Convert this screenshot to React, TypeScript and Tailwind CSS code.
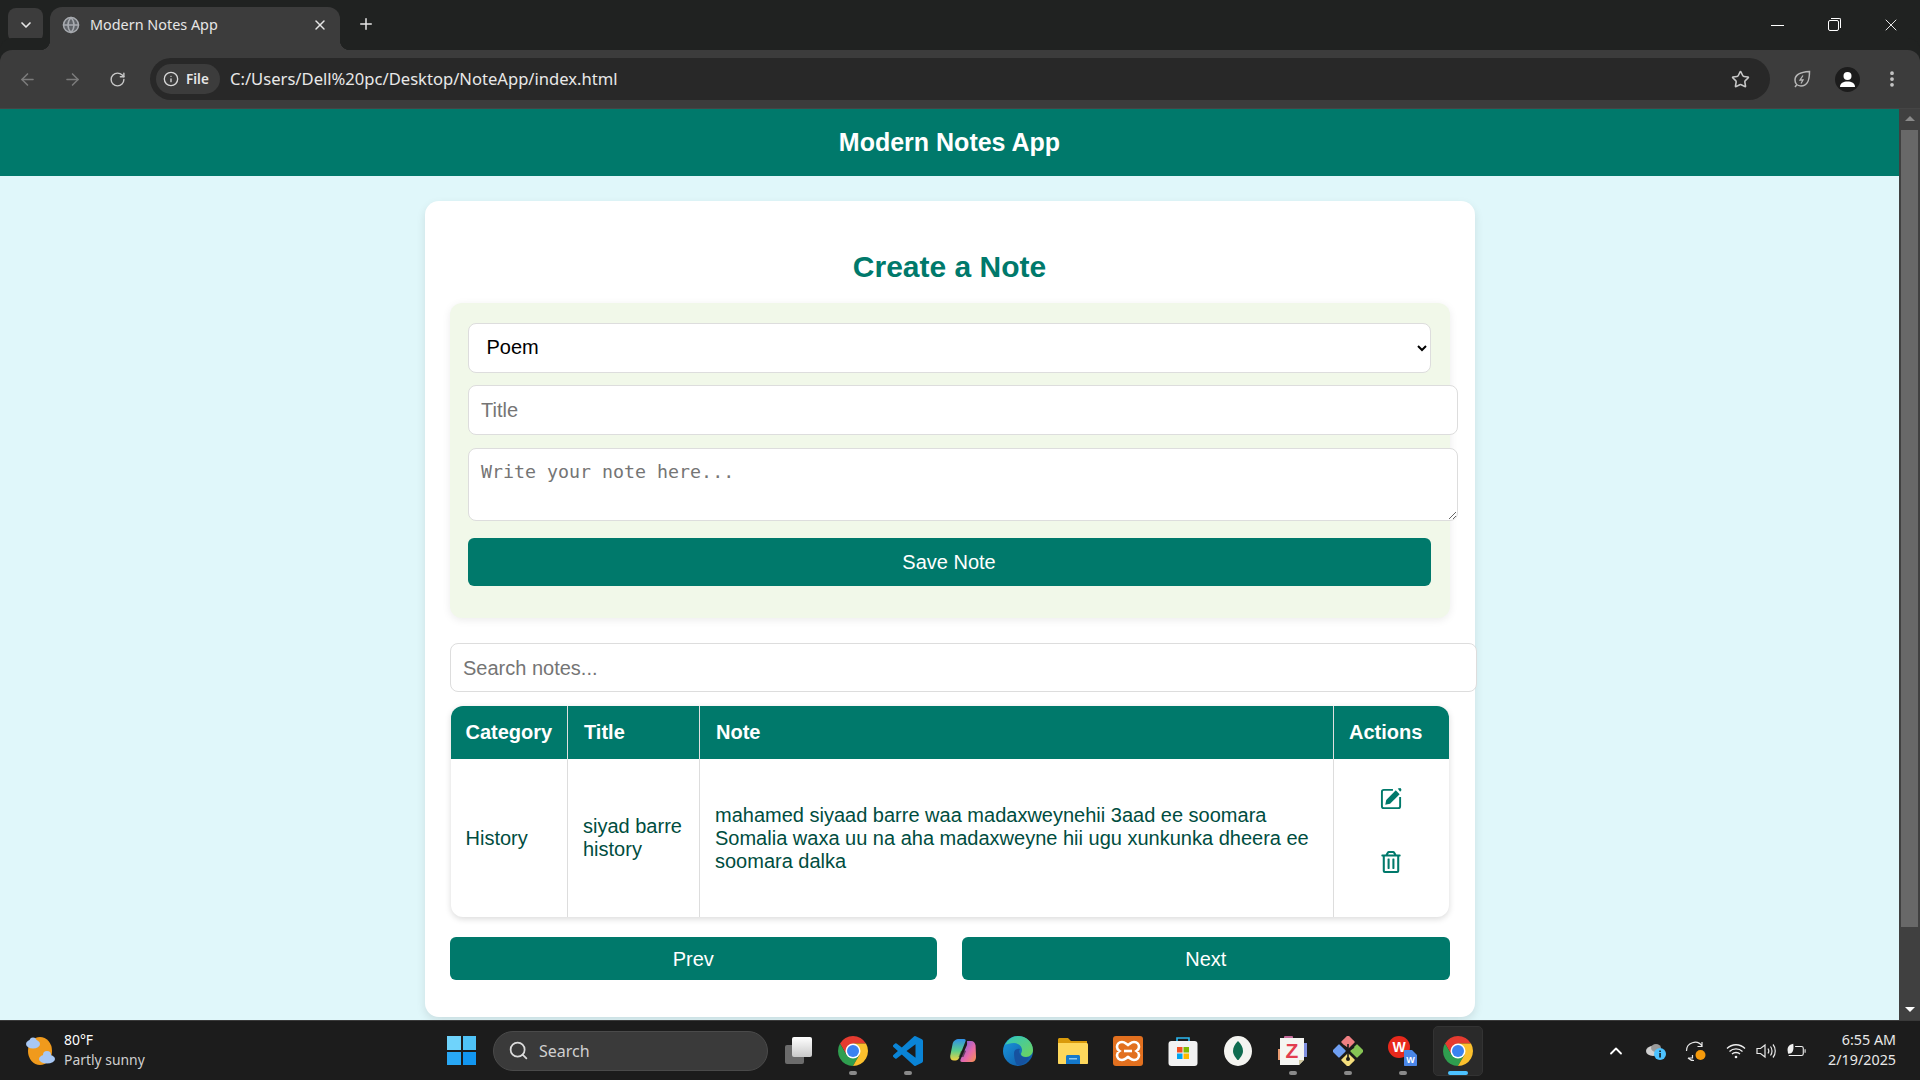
import {
  ArrowLeft,
  ArrowRight,
  ChevronDown,
  ChevronUp,
  Globe,
  Info,
  MoreVertical,
  Plus,
  RotateCw,
  Search,
  Star,
  X,
} from "lucide-react";
import { FaRegTrashAlt } from "react-icons/fa";
import type { ReactNode } from "react";

function ChromeLogo() {
  return (
    <svg viewBox="4 4 40 40" className="w-[30px] h-[30px]">
      <path d="M6.68 14A20 20 0 0 1 41.32 14H24L15.34 29Z" fill="#e53b30" />
      <path d="M6.68 14A20 20 0 0 0 24 44L32.66 29H15.34Z" fill="#2f9e4f" />
      <path d="M41.32 14A20 20 0 0 1 24 44L32.66 29L24 14Z" fill="#fbc02d" />
      <circle cx="24" cy="24" r="10" fill="#fff" />
      <circle cx="24" cy="24" r="8" fill="#3b82f0" />
    </svg>
  );
}

function VsCode() {
  return (
    <svg viewBox="0 0 24 24" className="w-[30px] h-[30px]">
      <path
        fill="#0a84d6"
        d="M23.15 2.587L18.21.21a1.494 1.494 0 0 0-1.705.29l-9.46 8.63-4.12-3.128a.999.999 0 0 0-1.276.057L.327 7.261A1 1 0 0 0 .326 8.74L3.899 12 .326 15.26a1 1 0 0 0 .001 1.479L1.65 17.94a.999.999 0 0 0 1.276.057l4.12-3.128 9.46 8.63a1.492 1.492 0 0 0 1.704.29l4.942-2.377A1.5 1.5 0 0 0 24 20.06V3.939a1.5 1.5 0 0 0-.85-1.352zm-5.146 14.861L10.826 12l7.178-5.448v10.896z"
      />
    </svg>
  );
}

function Copilot() {
  return (
    <svg viewBox="0 0 30 30" className="w-[30px] h-[30px]">
      <defs>
        <linearGradient id="cpa" x1="0" y1="0" x2="0" y2="1">
          <stop offset="0" stopColor="#2f8fe8" />
          <stop offset="0.55" stopColor="#5ccf8a" />
          <stop offset="1" stopColor="#f3d13f" />
        </linearGradient>
        <linearGradient id="cpb" x1="0" y1="0" x2="1" y2="1">
          <stop offset="0" stopColor="#6a5be8" />
          <stop offset="0.6" stopColor="#e86aa8" />
          <stop offset="1" stopColor="#f5934a" />
        </linearGradient>
      </defs>
      <path d="M11 3h5c1.500 0 2 1 1.500 2.200L11 22c-.6 1.600-1.600 2.500-3.400 2.500H6C3.500 24.500 2 23 2.200 20L4.600 8C5 5 8 3 11 3z" fill="url(#cpa)" />
      <path d="M19 5h4c2.600 0 4.200 2 4.600 4.500L28 20c.3 3-1.200 6-3.800 6H14c-1.600 0-2-1.200-1.500-2.400L19 9c.3-1.200 0-3 0-4z" fill="url(#cpb)" />
      <path d="M13 15c2-1 4-1 5 0l-2.500 6h-5z" fill="#1c1c1c" opacity="0.55" />
    </svg>
  );
}

function Edge() {
  return (
    <svg viewBox="0 0 30 30" className="w-[30px] h-[30px]">
      <defs>
        <linearGradient id="ega" x1="0" y1="0" x2="1" y2="1">
          <stop offset="0" stopColor="#2fc6c0" />
          <stop offset="1" stopColor="#6fd35a" />
        </linearGradient>
        <linearGradient id="egb" x1="0" y1="0" x2="1" y2="1">
          <stop offset="0" stopColor="#1a9ce0" />
          <stop offset="1" stopColor="#0f4f9e" />
        </linearGradient>
      </defs>
      <circle cx="15" cy="15" r="15" fill="url(#egb)" />
      <path d="M2 9C5 3 10 0 15 0c8 0 15 6 15 14 0 4-3 7-7 7-3 0-5-1-5-3 0-1 1-2 1-4 0-4-4-7-8-7-4 0-7 1-9 2z" fill="url(#ega)" />
      <path d="M11 17c0-3 3-5 6-4-1 1-1 3 0 5 1 3 5 4 9 3-2 5-7 9-12 8 0 0-3-4-3-12z" fill="#16529f" />
    </svg>
  );
}

function Folder() {
  return (
    <svg viewBox="0 0 30 30" className="w-[30px] h-[30px]">
      <path d="M0 3.500C0 2.700.7 2 1.500 2h8.500l3 3h16v6H0z" fill="#d99a0b" />
      <path d="M0 7h28.500c.8 0 1.500.7 1.500 1.500V27c0 .6-.4 1-1 1H1c-.6 0-1-.4-1-1z" fill="#fdd75c" />
      <path d="M8 20.500c0-.8.7-1.500 1.500-1.500h11c.8 0 1.500.7 1.500 1.500V28H8z" fill="#1479cc" />
      <rect x="11" y="22" width="8" height="1.500" fill="#8cc8f0" />
    </svg>
  );
}

function Xampp() {
  return (
    <svg viewBox="0 0 30 30" className="w-[30px] h-[30px]">
      <rect width="30" height="30" rx="3" fill="#e2701f" />
      <path
        d="M9 6c3 0 4 2 6 3 2-1 3-3 6-3 3.500 0 5 2.500 5 5 0 2-1 3-2.500 4 1.500 1 2.500 2 2.500 4 0 2.500-1.500 5-5 5-3 0-4-2-6-3-2 1-3 3-6 3-3.500 0-5-2.500-5-5 0-2 1-3 2.500-4C5 14 4 13 4 11c0-2.500 1.500-5 5-5z"
        fill="none"
        stroke="#fff"
        strokeWidth="2.600"
      />
      <path d="M11 15h8" stroke="#fff" strokeWidth="2.600" />
    </svg>
  );
}

function Store() {
  return (
    <svg viewBox="0 0 30 30" className="w-[30px] h-[30px]">
      <path d="M9 6V2h12v4" fill="none" stroke="#2bb8f0" strokeWidth="1.600" />
      <rect x="0.500" y="5" width="29" height="25" rx="3" fill="#f2f2f2" />
      <rect x="9" y="11" width="5.500" height="5.500" fill="#f25022" />
      <rect x="15.500" y="11" width="5.500" height="5.500" fill="#7fba00" />
      <rect x="9" y="17.500" width="5.500" height="5.500" fill="#00a4ef" />
      <rect x="15.500" y="17.500" width="5.500" height="5.500" fill="#ffb900" />
    </svg>
  );
}

function Mongo() {
  return (
    <svg viewBox="0 0 30 30" className="w-[30px] h-[30px]">
      <ellipse cx="15" cy="15" rx="14" ry="15" fill="#f4f4f0" />
      <path d="M15 5c3 3 5 6 5 10 0 4-3 7-4.500 9h-1C13 22 10 19 10 15c0-4 2-7 5-10z" fill="#0f6b4f" />
    </svg>
  );
}

function ZDoc() {
  return (
    <svg viewBox="0 0 30 30" className="w-[30px] h-[30px]">
      <rect x="6" y="0" width="9" height="5" rx="1" fill="#c46a9a" />
      <rect x="25" y="7" width="4" height="14" fill="#7f8fe0" />
      <rect x="0" y="13" width="4" height="11" fill="#e89a70" />
      <path d="M2 2h24v22l-5 5H2z" fill="#f5f5f2" />
      <path d="M21 29v-5h5z" fill="#d0c8a0" />
      <text x="14" y="22" textAnchor="middle" fontFamily="Liberation Sans" fontWeight="700" fontSize="21" fill="#e23d4f">
        Z
      </text>
    </svg>
  );
}

function GitDiamond() {
  return (
    <svg viewBox="0 0 30 30" className="w-[30px] h-[30px]">
      <rect x="10" y="1" width="10" height="10" transform="rotate(45 15 6)" fill="#ef7f82" rx="1" />
      <rect x="1" y="10" width="10" height="10" transform="rotate(45 6 15)" fill="#6f9ff2" rx="1" />
      <rect x="19" y="10" width="10" height="10" transform="rotate(45 24 15)" fill="#86c454" rx="1" />
      <rect x="10" y="19" width="10" height="10" transform="rotate(45 15 24)" fill="#f4de7c" rx="1" />
      <path d="M15 8v14M15 15l6-4M15 13l-4-3" stroke="#1c1c1c" strokeWidth="1.600" />
      <circle cx="15" cy="23" r="2" fill="#1c1c1c" />
    </svg>
  );
}

function Wps() {
  return (
    <svg viewBox="0 0 30 30" className="w-[30px] h-[30px]">
      <circle cx="11" cy="11" r="11" fill="#e8291c" />
      <text x="11" y="16" textAnchor="middle" fontFamily="Liberation Sans" fontWeight="700" fontSize="14" fill="#fff">
        W
      </text>
      <path d="M16 15c0-.6.4-1 1-1h7l5 5v10c0 .6-.4 1-1 1H17c-.6 0-1-.4-1-1z" fill="#4a86e8" />
      <text x="22.500" y="27" textAnchor="middle" fontFamily="Liberation Sans" fontWeight="700" fontSize="9" fill="#fff">
        W
      </text>
    </svg>
  );
}

function EditIcon() {
  return (
    <svg viewBox="0 0 24 24" className="w-[23px] h-[23px]" fill="none" stroke="#00796b" strokeWidth="2">
      <path d="M13.500 3H4a2 2 0 0 0-2 2v15a2 2 0 0 0 2 2h15a2 2 0 0 0 2-2v-9.500" />
      <path d="M5.500 18.500l1-5L16.500 3.500l4 4-10 10z" fill="#00796b" stroke="none" />
      <path d="M18.500 1.500l3 -0.500 1 2-1.500 2z" fill="#00796b" stroke="none" />
    </svg>
  );
}

function Slot({ children, dot, w = "w-[55px]" }: { children: ReactNode; dot?: boolean; w?: string }) {
  return (
    <div className={`relative ${w} h-full flex items-center justify-center`}>
      {children}
      {dot && <span className="absolute left-1/2 -translate-x-1/2 bottom-[5px] w-[8px] h-[4px] rounded-full bg-[#8a8a8a]" />}
    </div>
  );
}

function BrowserChrome() {
  return (
    <>
      <div className="h-[50px] bg-[#202221] flex items-end shrink-0 font-['Noto_Sans',sans-serif] text-[#e6e6e6]">
        <div className="ml-2 mb-2 w-[35px] h-[34px] rounded-lg bg-[#3c3c3c] flex items-center justify-center">
          <ChevronDown size={16} strokeWidth={2.5} />
        </div>
        <div className="relative ml-[7px] w-[290px] h-[43px] bg-[#3c3c3c] rounded-t-xl flex items-center pl-[12px] pr-[12px] pb-[7px]">
          <Globe size={18} className="text-[#a8abb0]" fill="#5f6368" />
          <span className="ml-[10px] text-[14.4px] flex-1">Modern Notes App</span>
          <X size={16} strokeWidth={2.2} />
          <span className="absolute -left-[10px] bottom-0 w-[10px] h-[10px] bg-[radial-gradient(circle_at_0_0,#202221_10px,#3c3c3c_10.5px)]" />
          <span className="absolute -right-[10px] bottom-0 w-[10px] h-[10px] bg-[radial-gradient(circle_at_100%_0,#202221_10px,#3c3c3c_10.5px)]" />
        </div>
        <div className="ml-[17px] mb-[17px]">
          <Plus size={18} strokeWidth={2} />
        </div>
        <div className="ml-auto h-full flex items-center">
          <div className="w-[56px] flex justify-center">
            <span className="block w-[13px] h-px bg-white" />
          </div>
          <div className="w-[56px] flex justify-center">
            <span className="relative block w-[11px] h-[11px] border border-white rounded-[2px] bg-[#202221] after:absolute after:-top-[3px] after:-right-[3px] after:w-[10px] after:h-[10px] after:border-t after:border-r after:border-white after:rounded-tr-[2px]" />
          </div>
          <div className="w-[58px] mr-[1px] pl-[1px] flex justify-center">
            <X size={20} strokeWidth={1.2} />
          </div>
        </div>
      </div>
      <div className="h-[59px] bg-[#3c3c3c] rounded-t-xl flex items-center shrink-0 border-b border-[#454545] font-['Noto_Sans',sans-serif] text-[#e6e6e6] shadow-[0_-12px_0_#202221]">
        <div className="w-[54px] flex justify-center">
          <ArrowLeft size={19} className="text-[#7b7b7b]" />
        </div>
        <div className="w-[36px] flex justify-center">
          <ArrowRight size={19} className="text-[#7b7b7b]" />
        </div>
        <div className="w-[54px] flex justify-center">
          <RotateCw size={17} className="text-[#c8c8c8]" />
        </div>
        <div className="ml-[6px] w-[1620px] h-[42px] bg-[#282828] rounded-full flex items-center pl-[6px] pr-[20px]">
          <div className="w-[64px] h-[30px] rounded-full bg-[#3c3c3c] flex items-center pl-[7px]">
            <Info size={16} className="text-[#d8d8d8]" />
            <span className="ml-[7px] text-[13.5px] font-semibold">File</span>
          </div>
          <span className="ml-[10px] text-[16.6px] flex-1 text-[#e8e8e8]">C:/Users/Dell%20pc/Desktop/NoteApp/index.html</span>
          <Star size={19} className="text-[#c8c8c8]" strokeWidth={2} />
        </div>
        <div className="ml-[20px] w-[24px] flex justify-center">
          <svg viewBox="0 0 20 20" className="w-[20px] h-[20px]" fill="none" stroke="#b8b8b8" strokeWidth="1.500">
            <path d="M17.500 2.500C17.500 11 16 17 9 17c-4 0-6-3-6-6 0-5 6-8 14.500-8.500zM3 18l2-2.500" />
            <path d="M11 6.500L8 11h3l-2 3.500" strokeWidth="1.300" />
          </svg>
        </div>
        <div className="ml-[21px] w-[25px] h-[25px] rounded-full bg-[#1c1c1c] relative overflow-hidden flex items-center justify-center">
          <svg viewBox="0 0 25 25" className="w-[25px] h-[25px]" fill="#fff">
            <circle cx="12.500" cy="9" r="4" />
            <path d="M5 20c0-4 3.500-5.500 7.500-5.500S20 16 20 20z" />
          </svg>
        </div>
        <div className="ml-[22px] flex justify-center">
          <MoreVertical size={20} className="text-[#c8c8c8]" strokeWidth={2.5} />
        </div>
      </div>
    </>
  );
}

function Scrollbar() {
  return (
    <aside className="w-[21px] bg-[#404040] flex flex-col items-center shrink-0 pt-[7px] pb-[8px]">
      <span className="block w-0 h-0 border-x-[5px] border-x-transparent border-b-[5px] border-b-[#8a8a8a]" />
      <div className="mt-[9px] w-[17px] h-[797px] bg-[#686868]" />
      <span className="mt-auto block w-0 h-0 border-x-[5px] border-x-transparent border-t-[5px] border-t-white" />
    </aside>
  );
}

function NotesPage() {
  return (
    <main className="flex-1 min-w-0 bg-[#e0f7fa] overflow-hidden font-['Liberation_Sans',Arial,sans-serif]">
      <header className="h-[67px] bg-[#00796b] flex items-center justify-center text-white font-bold text-[25px]">
        Modern Notes App
      </header>

      <div className="mx-auto mt-[25px] w-[1050px] bg-white rounded-[14px] shadow-[0_4px_10px_rgba(0,0,0,0.1)] px-[25px] pt-[49px] pb-[37px]">
        <h2 className="text-center text-[#00796b] font-bold text-[30px] leading-[34px]">Create a Note</h2>

        <form className="mt-[19px] bg-[#f1f8e9] rounded-[12px] shadow-[0_2px_8px_rgba(0,0,0,0.08)] pl-[18px] pr-[19px] pt-[20px] pb-[32px]">
          <select
            defaultValue="Poem"
            className="block w-full h-[50px] pl-[14px] pr-[5px] pb-[2px] border border-[#ddd] rounded-[8px] bg-white text-black text-[20px]"
          >
            <option>Poem</option>
            <option>History</option>
            <option>Story</option>
          </select>
          <input
            placeholder="Title"
            className="block box-content w-full mt-[12px] h-[22px] px-[12.5px] py-[13px] border border-[#ddd] rounded-[8px] bg-white text-[20px] placeholder:text-[#757575]"
          />
          <textarea
            placeholder="Write your note here..."
            className="block box-content w-full mt-[13px] h-[60px] px-[12.5px] pt-[11px] border border-[#ddd] rounded-[8px] bg-white text-[18.3px] leading-[24px] resize font-['DejaVu_Sans_Mono',monospace] placeholder:text-[#757575]"
          />
          <button type="button" className="block w-full mt-[17px] h-[48px] rounded-[6px] bg-[#00796b] text-white text-[20px]">
            Save Note
          </button>
        </form>

        <input
          placeholder="Search notes..."
          className="block box-content w-full mt-[25px] h-[22px] px-[12.5px] py-[12.5px] border border-[#ddd] rounded-[8px] bg-white text-[20px] placeholder:text-[#757575]"
        />

        <div className="mt-[14px] ml-[1px] w-[998px] rounded-[12px] overflow-hidden shadow-[0_2px_6px_rgba(0,0,0,0.15)]">
          <table className="w-full table-fixed border-collapse text-[20px] leading-[23px] text-[#004d40]">
            <colgroup>
              <col className="w-[117px]" />
              <col className="w-[132px]" />
              <col className="w-[634px]" />
              <col />
            </colgroup>
            <thead>
              <tr className="h-[53px] bg-[#00796b] text-white text-left font-bold">
                <th className="pl-[15px] border-r border-[#e0e0e0]">Category</th>
                <th className="pl-[16px] border-r border-[#e0e0e0]">Title</th>
                <th className="pl-[16px] border-r border-[#e0e0e0]">Note</th>
                <th className="pl-[15px]">Actions</th>
              </tr>
            </thead>
            <tbody>
              <tr className="h-[158px]">
                <td className="pl-[15px] border-r border-[#ddd]">History</td>
                <td className="pl-[15px] pr-[10px] border-r border-[#ddd]">siyad barre history</td>
                <td className="pl-[15px] pr-[16px] border-r border-[#ddd]">
                  mahamed siyaad barre waa madaxweynehii 3aad ee soomara Somalia waxa uu na aha madaxweyne hii ugu xunkunka dheera ee soomara dalka
                </td>
                <td>
                  <div className="flex flex-col items-center gap-[41px] pb-[16px] text-[#00796b]">
                    <EditIcon />
                    <FaRegTrashAlt size={22} />
                  </div>
                </td>
              </tr>
            </tbody>
          </table>
        </div>

        <div className="mt-[20px] flex gap-[25px]">
          <button type="button" className="flex-1 h-[43px] rounded-[6px] bg-[#00796b] text-white text-[20px]">
            Prev
          </button>
          <button type="button" className="flex-1 h-[43px] rounded-[6px] bg-[#00796b] text-white text-[20px]">
            Next
          </button>
        </div>
      </div>
    </main>
  );
}

function Taskbar() {
  return (
    <footer className="h-[60px] bg-[#1c1c1c] border-t border-[#3a3a3a] flex items-center shrink-0 font-['Noto_Sans',sans-serif] text-[#e8e8e8]">
      <div className="w-[434px] pl-[25px] flex items-center">
        <svg viewBox="0 0 30 30" className="w-[30px] h-[30px]">
          <ellipse cx="15" cy="15" rx="12" ry="14" fill="#f09a1c" />
          <ellipse cx="8" cy="8" rx="7" ry="4.500" fill="#a8c8f5" />
          <circle cx="8" cy="5" r="3.500" fill="#a8c8f5" />
          <ellipse cx="22" cy="23" rx="8" ry="4.500" fill="#a8c8f5" />
          <circle cx="22" cy="19" r="4" fill="#a8c8f5" />
        </svg>
        <div className="ml-[9px] pb-[2px] text-[13.9px] leading-[20px]">
          <div className="text-white">80°F</div>
          <div className="text-[#cfcfcf]">Partly sunny</div>
        </div>
      </div>
      <Slot>
        <div className="grid grid-cols-2 gap-[2px] w-[29px] h-[29px]">
          <span className="bg-[#6fd3fb]" />
          <span className="bg-[#4fc3f7]" />
          <span className="bg-[#29a8f5]" />
          <span className="bg-[#1296f0]" />
        </div>
      </Slot>
      <div className="ml-[4px] w-[275px] h-[40px] rounded-full bg-[#3a3a3a] border border-[#4a4a4a] flex items-center pl-[14px]">
        <Search size={21} className="text-[#dcdcdc]" strokeWidth={2} />
        <span className="ml-[10px] text-[16px] text-[#d0d0d0]">Search</span>
      </div>
      <div className="ml-[2.5px] h-full flex">
        <Slot>
          <div className="relative w-[27px] h-[27px]">
            <span className="absolute left-0 bottom-0 w-[19px] h-[19px] bg-[#6b6b6b] rounded-[2px]" />
            <span className="absolute right-0 top-0 w-[20px] h-[20px] bg-gradient-to-b from-white to-[#c9c9c9] rounded-[2px]" />
          </div>
        </Slot>
        <Slot dot><ChromeLogo /></Slot>
        <Slot dot><VsCode /></Slot>
        <Slot><Copilot /></Slot>
        <Slot><Edge /></Slot>
        <Slot><Folder /></Slot>
        <Slot><Xampp /></Slot>
        <Slot><Store /></Slot>
        <Slot><Mongo /></Slot>
        <Slot dot><ZDoc /></Slot>
        <Slot dot><GitDiamond /></Slot>
        <Slot dot><Wps /></Slot>
        <div className="relative w-[55px] h-full flex items-center justify-center">
          <div className="w-[50px] h-[50px] rounded-[5px] bg-[#2a2a2a] border border-[#333] flex items-center justify-center">
            <ChromeLogo />
          </div>
          <span className="absolute left-1/2 -translate-x-1/2 bottom-[5px] w-[20px] h-[4px] rounded-full bg-[#4cc2ff]" />
        </div>
      </div>
      <div className="ml-auto h-full flex items-center pr-[24px]">
        <Slot w="w-[40px]"><ChevronUp size={20} strokeWidth={2.2} className="text-white" /></Slot>
        <Slot w="w-[40px]">
          <svg viewBox="0 0 22 18" className="w-[22px] h-[18px]">
            <ellipse cx="8" cy="9" rx="7" ry="5" fill="#d0d0d0" />
            <ellipse cx="11" cy="6" rx="5" ry="4" fill="#9a9a9a" />
            <circle cx="15" cy="12" r="6" fill="#4cc2ff" />
            <rect x="14.300" y="11" width="1.500" height="4.500" fill="#111" />
            <rect x="14.300" y="8.500" width="1.500" height="1.500" fill="#111" />
          </svg>
        </Slot>
        <Slot w="w-[40px]">
          <svg viewBox="0 0 22 22" className="w-[22px] h-[22px]" fill="none" stroke="#e8e8e8" strokeWidth="1.200">
            <path d="M1.500 11A8.500 8.500 0 0 1 17 6M17 2v4.500h-4.500M3 18h4.500v-3M3 18c1.500 1.500 4 2.500 6 2.500" />
            <circle cx="15.500" cy="15" r="5" fill="#f59a0b" stroke="none" />
          </svg>
        </Slot>
        <Slot w="ml-[5px] w-[30px]">
          <svg viewBox="0 0 20 16" className="w-[20px] h-[16px]" fill="none" stroke="#f0f0f0" strokeWidth="1.300">
            <path d="M1 5.500c5-5 13-5 18 0M3.500 8.500c3.500-3.500 9.500-3.500 13 0M6 11c2-2 6-2 8 0" />
            <circle cx="10" cy="14" r="1.300" fill="#f0f0f0" stroke="none" />
          </svg>
        </Slot>
        <Slot w="w-[30px]">
          <svg viewBox="0 0 20 18" className="w-[20px] h-[18px]" fill="none" stroke="#e8e8e8" strokeWidth="1.200">
            <path d="M1 6.500h3.500L9 3v12l-4.500-3.500H1z" />
            <path d="M12 6.500c1 1.500 1 3.500 0 5M14.500 4.500c2 2.500 2 6.500 0 9M17 2.500c3 3.500 3 9.500 0 13" />
          </svg>
        </Slot>
        <Slot w="w-[30px]">
          <svg viewBox="0 0 22 18" className="w-[20px] h-[18px]" fill="none" stroke="#f0f0f0" strokeWidth="1.200">
            <path d="M10 4h7c1 0 2 .8 2 2v6c0 1-1 2-2 2H3" />
            <path d="M21 7v4" />
            <path d="M8 1C3 2 1 5 2 10c0 1 .5 2 1 2 4 0 6-3 5-11z" fill="#f0f0f0" stroke="none" />
          </svg>
        </Slot>
        <div className="w-[85px] pb-[2px] text-right text-[14.3px] leading-[20px]">
          <div>6:55 AM</div>
          <div>2/19/2025</div>
        </div>
      </div>
    </footer>
  );
}

export default function App() {
  return (
    <div className="h-screen flex flex-col overflow-hidden bg-[#202221]">
      <BrowserChrome />
      <div className="flex-1 min-h-0 flex">
        <NotesPage />
        <Scrollbar />
      </div>
      <Taskbar />
    </div>
  );
}
